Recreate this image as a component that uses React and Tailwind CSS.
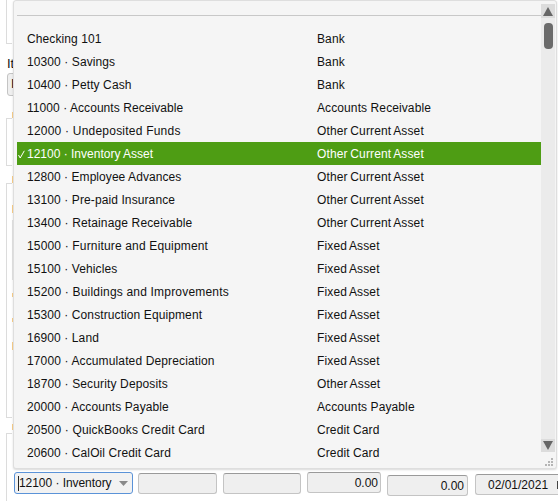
const OCA = "Other Current Asset";
const rows = [
  ["Checking 101", "Bank"],
  ["10300 · Savings", "Bank"],
  ["10400 · Petty Cash", "Bank"],
  ["11000 · Accounts Receivable", "Accounts Receivable", "tracking-[0.06px]"],
  ["12000 · Undeposited Funds", OCA, "tracking-[0.22px]"],
  ["12100 · Inventory Asset", OCA, "tracking-[0px]", true],
  ["12800 · Employee Advances", OCA, "tracking-[0.06px]"],
  ["13100 · Pre-paid Insurance", OCA],
  ["13400 · Retainage Receivable", OCA, "tracking-[0.14px]"],
  ["15000 · Furniture and Equipment", "Fixed Asset", "tracking-[0.16px]"],
  ["15100 · Vehicles", "Fixed Asset"],
  ["15200 · Buildings and Improvements", "Fixed Asset", "tracking-[0.19px]"],
  ["15300 · Construction Equipment", "Fixed Asset"],
  ["16900 · Land", "Fixed Asset"],
  ["17000 · Accumulated Depreciation", "Fixed Asset", "tracking-[0.13px]"],
  ["18700 · Security Deposits", "Other Asset", "tracking-[0.14px]"],
  ["20000 · Accounts Payable", "Accounts Payable"],
  ["20500 · QuickBooks Credit Card", "Credit Card", "tracking-[0.17px]"],
  ["20600 · CalOil Credit Card", "Credit Card"],
];

const boxCls =
  "h-[21px] shrink-0 rounded-[3px] border border-[#c4c4c4] border-t-[#9a9a9a] bg-[#efefef] leading-[19px]";

export default function App() {
  return (
    <div className="relative w-[558px] h-[501px] overflow-hidden bg-white text-[12px] text-[#111] font-['Liberation_Sans',Arial,sans-serif]">
      {/* page behind the dropdown */}
      <div className="flex">
        <div className="w-[12px] shrink-0 flex flex-col">
          <div className="ml-[6px] h-[44px] w-[6px] border-l border-b border-[#dcdcdc]" />
          <div className="ml-[7px] mt-[13px] h-[14px] leading-[14px] text-[13px]">It</div>
          <div className="ml-[7px] mt-[2px] h-[23px] w-[8px] rounded-l-[3px] border border-[#c4c4c4] bg-[#efefef] pl-[3px] leading-[21px]">I</div>
          <div className="ml-[6px] mt-[22px] h-[48px] w-[6px] border-l border-t border-b border-[#dcdcdc]" />
          <div className="ml-[6px] mt-[17px] h-[235px] w-[6px] border-l border-t border-b border-[#dcdcdc]" />
          <div className="ml-[6px] mt-[15px] h-[68px] w-[6px] border-l border-t border-[#dcdcdc]">
            <div className="mt-[38px] ml-[7px] flex items-start w-[544px]">
              <div className="h-[22px] w-[119px] shrink-0 rounded-[3px] border border-[#5b93d8] bg-[#f2f2f2] flex items-center pl-[3px] pr-[4px] justify-between tracking-[-0.05px]">
                <span className="border-l border-[#222] leading-[15px]">12100 · Inventory</span>
                <svg width="9" height="5" viewBox="0 0 9 5" className="mt-[1px]"><path d="M0 0H9L4.5 5Z" fill="#8a8a8a" /></svg>
              </div>
              <div className={`${boxCls} w-[79px] mt-[1px] ml-[5px]`} />
              <div className={`${boxCls} w-[78px] mt-[1px] ml-[6px]`} />
              <div className={`${boxCls} w-[74px] ml-[6px] text-right pr-[2px] pt-[1px]`}>0.00</div>
              <div className={`${boxCls} w-[81px] mt-[3px] ml-[6px] text-right pr-[3px] pt-[1px]`}>0.00</div>
              <div className={`${boxCls} w-[83px] mt-[2px] ml-[7px] pl-[12px] rounded-r-none border-r-0 pt-[1px] flex justify-between`}>
                <span>02/01/2021</span>
                <span className="mt-[5px] h-[8px] w-[1px] bg-[#444]" />
              </div>
            </div>
          </div>
        </div>
        <div className="w-[2px] shrink-0 flex flex-col">
          <div className="mt-[112px] h-[6px] bg-[#fbd08a]" />
          <div className="mt-[58px] h-[7px] bg-[#fbd08a]" />
          <div className="mt-[22px] h-[8px] bg-[#fbd08a]" />
          <div className="mt-[7px] h-[60px] bg-[#e4e4e4]" />
          <div className="mt-[13px] h-[4px] bg-[#fbd08a]" />
          <div className="mt-[21px] h-[4px] bg-[#fbd08a]" />
          <div className="mt-[20px] h-[8px] bg-[#fbd08a]" />
          <div className="mt-[74px] h-[6px] bg-[#fbd08a]" />
        </div>
      </div>

      {/* dropdown list */}
      <div className="absolute left-[13px] top-0 w-[544px] h-[469px] rounded-[3px] border border-[#dedede] bg-[#f5f5f5] shadow-[0_1px_2px_rgba(0,0,0,0.15)] flex">
        <div className="flex-1 min-w-0 pl-[3px]">
          <div className="h-[15px] border-b border-[#c8c8c8]" />
          <div className="mt-[11px]">
            {rows.map(([name, type, track, active]) => (
              <div
                key={name}
                className={`flex h-[23px] pt-[1px] items-center leading-[22px] ${active ? "bg-[#4e9d14] text-white" : ""}`}
              >
                <span className="w-[10px] flex items-center pl-[1px]">
                  {active ? (
                    <svg width="7" height="9" viewBox="0 0 7 9" fill="none">
                      <path d="M0.5 5 2.2 8 6.3 0.8" stroke="#fff" strokeWidth="1" />
                    </svg>
                  ) : null}
                </span>
                <span className={`w-[290px] ${track || "tracking-[0.1px]"}`}>{name}</span>
                <span
                  className={
                    type.includes("Asset")
                      ? "tracking-[0.15px] [word-spacing:-1px]"
                      : "tracking-[0.1px]"
                  }
                >
                  {type}
                </span>
              </div>
            ))}
          </div>
        </div>
        <div className="w-[14px] mr-[1px] mt-[3px] flex flex-col items-center bg-[#ebebeb]">
          <div className="h-[14px] w-full bg-[#dcdcdc] flex items-center justify-center">
            <svg width="10" height="9" viewBox="0 0 10 9"><path d="M5 0 10 9H0Z" fill="#666" /></svg>
          </div>
          <div className="mt-[5px] h-[26px] w-[9px] rounded-[4px] bg-[#6b6b6b]" />
          <div className="flex-1" />
          <div className="h-[13px] w-full bg-[#dcdcdc] flex items-center justify-center">
            <svg width="10" height="9" viewBox="0 0 10 9"><path d="M0 0H10L5 9Z" fill="#666" /></svg>
          </div>
          <div className="h-[16px] w-full bg-[#f5f5f5] flex items-end justify-end p-[2px]">
            <svg width="8" height="8" viewBox="0 0 8 8" fill="#b5b5b5">
              <rect x="6" y="0" width="2" height="2" />
              <rect x="3" y="3" width="2" height="2" />
              <rect x="6" y="3" width="2" height="2" />
              <rect x="0" y="6" width="2" height="2" />
              <rect x="3" y="6" width="2" height="2" />
              <rect x="6" y="6" width="2" height="2" />
            </svg>
          </div>
        </div>
      </div>
    </div>
  );
}
